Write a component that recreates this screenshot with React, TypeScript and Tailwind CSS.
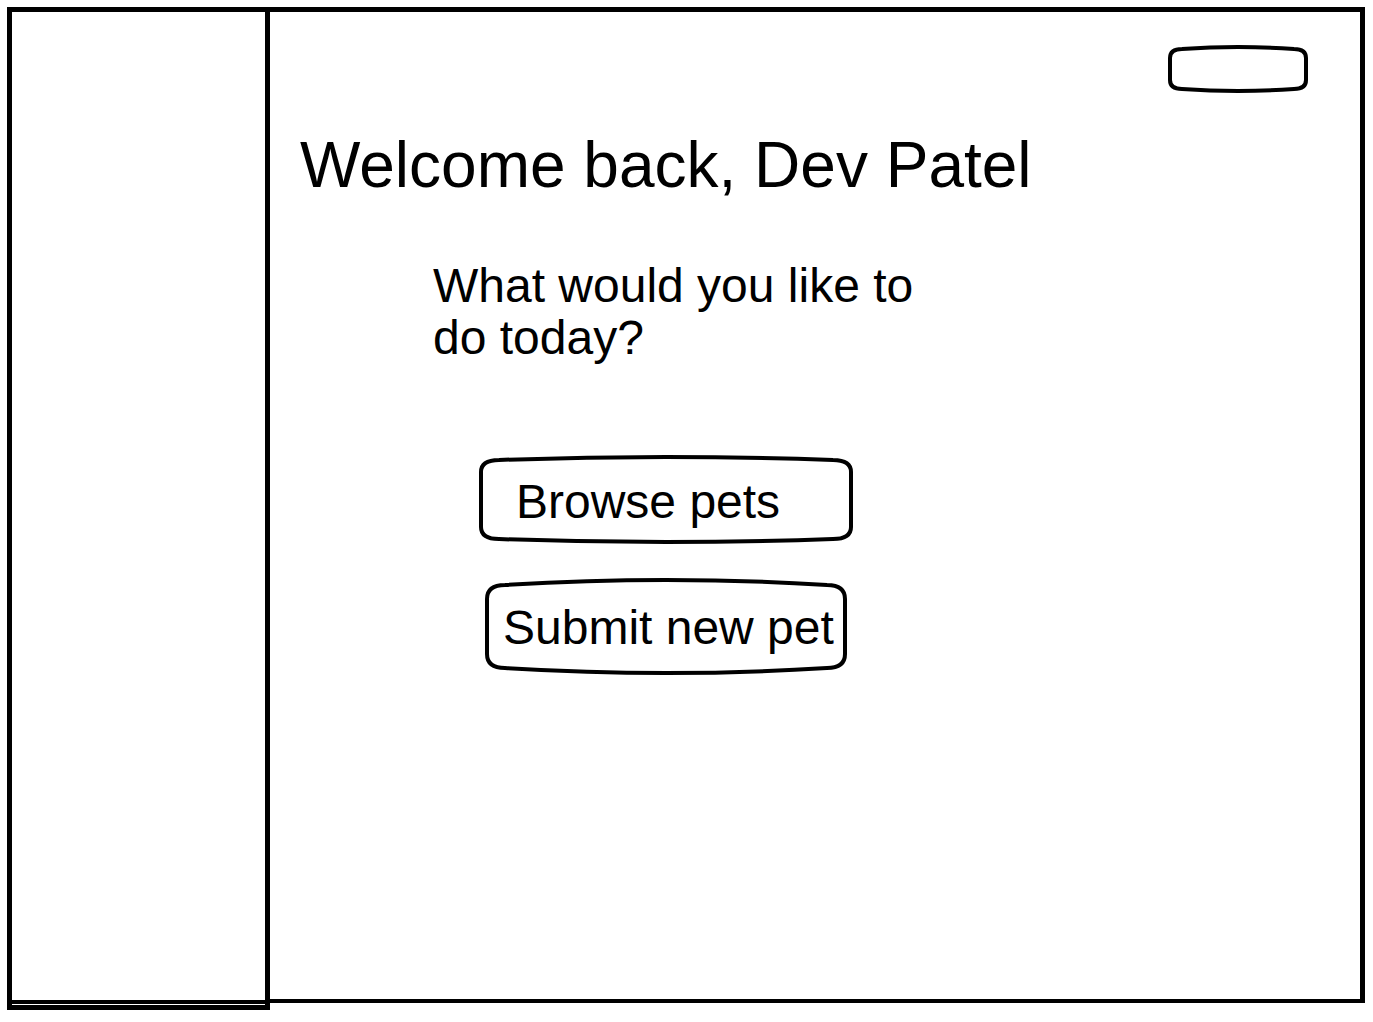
import React from "react";

function Outline({ w, h, dy, rx, ry }: { w: number; h: number; dy: number; rx: number; ry: number }) {
  const s = 2;
  const d = [
    `M ${s},${dy + ry}`,
    `Q ${s},${dy} ${s + rx},${dy}`,
    `Q ${w / 2},${s * 2 - dy} ${w - s - rx},${dy}`,
    `Q ${w - s},${dy} ${w - s},${dy + ry}`,
    `L ${w - s},${h - dy - ry}`,
    `Q ${w - s},${h - dy} ${w - s - rx},${h - dy}`,
    `Q ${w / 2},${h - s * 2 + dy} ${s + rx},${h - dy}`,
    `Q ${s},${h - dy} ${s},${h - dy - ry}`,
    "Z",
  ].join(" ");
  return (
    <svg
      className="absolute inset-0 pointer-events-none"
      width={w}
      height={h}
      viewBox={`0 0 ${w} ${h}`}
      fill="none"
    >
      <path d={d} stroke="#000" strokeWidth={4} strokeLinejoin="round" />
    </svg>
  );
}

export default function App() {
  return (
    <div
      className="w-[1373px] h-[1022px] bg-white text-black pt-[7px] pl-[7px] flex items-start"
      style={{ fontFamily: '"Liberation Sans", Arial, sans-serif' }}
    >
      {/* Sidebar */}
      <div className="w-[263px] h-[1003px] border-[5px] border-black flex flex-col">
        <div className="flex-1" />
        <div className="h-[4px] bg-black mb-[1px]" />
      </div>

      {/* Main */}
      <div className="w-[1095px] h-[996px] border-t-[5px] border-b-[4px] border-r-[5px] border-black flex flex-col">
        <div className="flex justify-end pt-[33px] pr-[52px]">
          <button className="relative w-[140px] h-[48px]">
            <Outline w={140} h={48} dy={4} rx={12} ry={9} />
          </button>
        </div>

        <h1 className="mt-[40px] ml-[30px] text-[64px] leading-[64px] font-normal">
          Welcome back, Dev Patel
        </h1>

        <p className="mt-[63px] ml-[163px] w-[520px] text-[48px] leading-[52px]">
          What would you like to do today?
        </p>

        <div className="flex flex-col mt-[91px]">
          <button className="relative ml-[209px] w-[374px] h-[89px] flex items-center pl-[37px] text-[48px] leading-[48px]">
            <Outline w={374} h={89} dy={5} rx={18} ry={12} />
            <span className="relative mt-[4px]">Browse pets</span>
          </button>
          <button className="relative mt-[34px] ml-[215px] w-[362px] h-[97px] flex items-center pl-[18px] text-[48px] leading-[48px]">
            <Outline w={362} h={97} dy={7} rx={18} ry={14} />
            <span className="relative mt-[2px]">Submit new pet</span>
          </button>
        </div>
      </div>
    </div>
  );
}
